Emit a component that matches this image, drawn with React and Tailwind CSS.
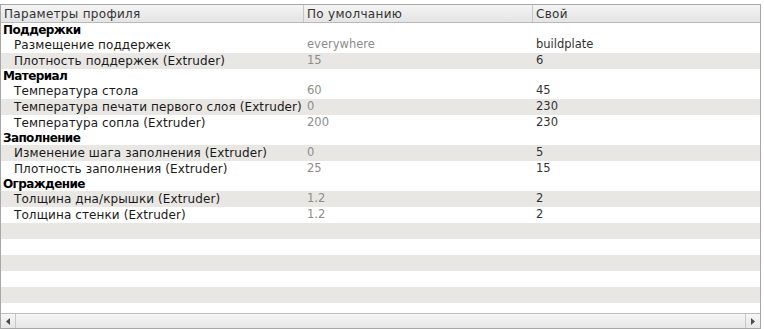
import React from 'react';

const groups = [
  {
    name: 'Поддержки',
    items: [
      { label: 'Размещение поддержек', def: 'everywhere', own: 'buildplate' },
      { label: 'Плотность поддержек (Extruder)', def: '15', own: '6', shade: true },
    ],
  },
  {
    name: 'Материал',
    items: [
      { label: 'Температура стола', def: '60', own: '45' },
      { label: 'Температура печати первого слоя (Extruder)', def: '0', own: '230', shade: true },
      { label: 'Температура сопла (Extruder)', def: '200', own: '230' },
    ],
  },
  {
    name: 'Заполнение',
    items: [
      { label: 'Изменение шага заполнения (Extruder)', def: '0', own: '5', shade: true },
      { label: 'Плотность заполнения (Extruder)', def: '25', own: '15' },
    ],
  },
  {
    name: 'Ограждение',
    items: [
      { label: 'Толщина дна/крышки (Extruder)', def: '1.2', own: '2', shade: true },
      { label: 'Толщина стенки (Extruder)', def: '1.2', own: '2' },
    ],
  },
];

const emptyRows = [true, false, true, false, true];

function ItemRow({ label, def, own, shade }) {
  return (
    <div className={`grid grid-cols-[303px_229px_1fr] h-[16px] items-center ${shade ? 'bg-[#e9e7e4]' : 'bg-white'}`}>
      <span className="pl-[13px] text-[#1a1a1a] whitespace-nowrap tracking-[0.1px]">{label}</span>
      <span className="pl-[3px] text-[#8c8c8c] text-[11.5px]">{def}</span>
      <span className="pl-[3px] text-[#333] text-[11.5px]">{own}</span>
    </div>
  );
}

function Arrow({ dir }) {
  return (
    <svg width="4" height="7" viewBox="0 0 4 7">
      {dir === 'left'
        ? <path d="M4 0 L0 3.5 L4 7 Z" fill="#4a4a4a" />
        : <path d="M0 0 L4 3.5 L0 7 Z" fill="#4a4a4a" />}
    </svg>
  );
}

export default function App() {
  return (
    <div className="w-[764px] h-[329px] bg-white pt-[4px] text-[12px] leading-none" style={{ fontFamily: '"DejaVu Sans", Verdana, sans-serif' }}>
      <div className="w-[761px] h-[325px] border border-[#a7a7a7] flex flex-col overflow-hidden">
        {/* Header */}
        <div className="grid grid-cols-[303px_229px_1fr] h-[18px] border-b border-[#b9b9b9] bg-gradient-to-b from-[#f4f4f4] to-[#e4e4e4] text-[#333] tracking-[0.3px]">
          <div className="pl-[3px] flex items-center border-r border-[#c6c6c6]">Параметры профиля</div>
          <div className="pl-[3px] flex items-center border-r border-[#c6c6c6]">По умолчанию</div>
          <div className="pl-[3px] flex items-center">Свой</div>
        </div>

        {/* Rows */}
        <div className="flex-1 flex flex-col">
          {groups.map(g => (
            <React.Fragment key={g.name}>
              <div className="h-[14px] flex items-center pl-[2px] font-bold text-black bg-white text-[12px] tracking-[-0.6px]">{g.name}</div>
              {g.items.map(it => (
                <ItemRow key={it.label} {...it} />
              ))}
            </React.Fragment>
          ))}
          {emptyRows.map((shade, i) => (
            <div key={i} className={`h-[16px] ${shade ? 'bg-[#e9e7e4]' : 'bg-white'}`} />
          ))}
          <div className="flex-1 bg-white" />
        </div>

        {/* Horizontal scrollbar */}
        <div className="h-[15px] border-t border-[#bdbdbd] flex bg-gradient-to-b from-[#f6f6f6] to-[#e6e6e6]">
          <div className="w-[15px] flex items-center justify-center border-r border-[#c8c8c8]">
            <Arrow dir="left" />
          </div>
          <div className="flex-1" />
          <div className="w-[15px] flex items-center justify-center border-l border-[#c8c8c8]">
            <Arrow dir="right" />
          </div>
        </div>
      </div>
    </div>
  );
}
